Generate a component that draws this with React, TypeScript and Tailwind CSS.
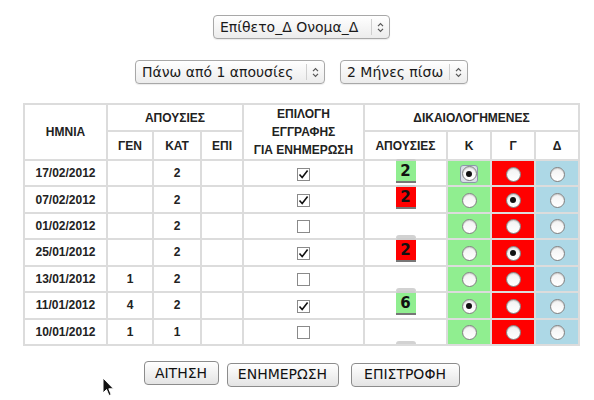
import React from 'react'

type Row = {
  date: string
  gen: string
  kat: string
  check: boolean
  badge?: { n: string; color: 'green' | 'red' }
  pick?: 'K' | 'G' | 'D'
  focus?: boolean
}

const rows: Row[] = [
  { date: '17/02/2012', gen: '', kat: '2', check: true, badge: { n: '2', color: 'green' }, pick: 'K', focus: true },
  { date: '07/02/2012', gen: '', kat: '2', check: true, badge: { n: '2', color: 'red' }, pick: 'G' },
  { date: '01/02/2012', gen: '', kat: '2', check: false },
  { date: '25/01/2012', gen: '', kat: '2', check: true, badge: { n: '2', color: 'red' }, pick: 'G' },
  { date: '13/01/2012', gen: '1', kat: '2', check: false },
  { date: '11/01/2012', gen: '4', kat: '2', check: true, badge: { n: '6', color: 'green' }, pick: 'K' },
  { date: '10/01/2012', gen: '1', kat: '1', check: false },
]

const ui = { fontFamily: '"DejaVu Sans", "Noto Sans", sans-serif' }
const tableFont = { fontFamily: '"Liberation Sans", Arial, sans-serif' }

function Arrows() {
  return (
    <svg width="7" height="11" viewBox="0 0 7 11" fill="none" stroke="#555" strokeWidth="1.2">
      <path d="M1 4.2 L3.5 1.6 L6 4.2" />
      <path d="M1 6.8 L3.5 9.4 L6 6.8" />
    </svg>
  )
}

function Select({ label, w }: { label: string; w: string }) {
  return (
    <div
      className={`${w} h-[24px] flex items-center border border-[#a8a8a8] rounded-[4px] bg-gradient-to-b from-white to-[#ececec] text-[14px] text-[#1a1a1a] shadow-[0_1px_1px_rgba(0,0,0,0.08)]`}
      style={ui}
    >
      <span className="flex-1 pl-[6px] whitespace-nowrap">{label}</span>
      <span className="w-px h-[16px] bg-[#cfcfcf]" />
      <span className="w-[17px] flex justify-center">
        <Arrows />
      </span>
    </div>
  )
}

function Button({ label, w }: { label: string; w: string }) {
  return (
    <button
      className={`${w} h-[24px] border border-[#8c8c8c] rounded-[4px] bg-gradient-to-b from-white to-[#e4e4e4] text-[14px] text-[#111]`}
      style={ui}
    >
      {label}
    </button>
  )
}

function Check({ on }: { on: boolean }) {
  return (
    <span className="inline-flex w-[13px] h-[13px] border border-[#8a8a8a] bg-white items-center justify-center align-middle">
      {on && (
        <svg width="11" height="11" viewBox="0 0 11 11" fill="none" stroke="#111" strokeWidth="1.6">
          <path d="M1.5 5.5 L4.2 8.6 L9.6 1.6" />
        </svg>
      )}
    </span>
  )
}

function Radio({ on, focus }: { on: boolean; focus?: boolean }) {
  const dot = (
    <span className="w-[15px] h-[15px] rounded-full border border-[#7f7f7f] bg-gradient-to-b from-[#f2f2f2] to-white flex items-center justify-center shadow-[inset_0_1px_1px_rgba(0,0,0,0.15)]">
      {on && <span className="w-[6px] h-[6px] rounded-full bg-[#111]" />}
    </span>
  )
  if (focus) {
    return (
      <span className="inline-flex w-[18px] h-[18px] rounded-[3px] border border-[#8d97aa] bg-[#d9dee7] items-center justify-center align-middle">
        {dot}
      </span>
    )
  }
  return <span className="inline-flex align-middle">{dot}</span>
}

function Badge({ b }: { b?: Row['badge'] }) {
  if (!b) {
    return (
      <div className="h-[24px] flex flex-col justify-end items-center">
        <div className="w-[20px] h-[3px] rounded-t-[3px] bg-[#d2d2d2]" />
      </div>
    )
  }
  return (
    <div className="h-[24px] flex flex-col items-center">
      <div
        className={`relative w-[20px] h-[22px] border-b-2 border-[#777] text-[15px] font-bold leading-[20px] text-[#111] text-center ${
          b.color === 'green' ? 'bg-[#90ee90]' : 'bg-[#ff0000]'
        }`}
        style={ui}
      >
        <span className="absolute -top-[2px] left-0 right-0 h-[2px] rounded-t-[3px] bg-[#cdcdcd]" />
        {b.n}
      </div>
    </div>
  )
}

const cell = 'border-2 border-[#dcdcdc] text-center p-0'

export default function App() {
  return (
    <div className="w-[594px] h-[400px] bg-white relative">
      <div className="w-[555px] ml-[24px] flex flex-col items-center pt-[15px]">
        <Select label="Επίθετο_Δ Ονομα_Δ" w="w-[177px]" />

        <div className="flex gap-[15px] mt-[21px]">
          <Select label="Πάνω από 1 απουσίες" w="w-[190px]" />
          <Select label="2 Μήνες πίσω" w="w-[128px]" />
        </div>

        <table
          className="mt-[19px] w-[555px] table-fixed border-collapse text-[12px] font-bold text-[#222]"
          style={tableFont}
        >
          <colgroup>
            <col className="w-[83px]" />
            <col className="w-[46px]" />
            <col className="w-[48px]" />
            <col className="w-[42px]" />
            <col className="w-[121px]" />
            <col className="w-[83px]" />
            <col className="w-[44px]" />
            <col className="w-[44px]" />
            <col className="w-[44px]" />
          </colgroup>
          <thead>
            <tr className="h-[26px]">
              <th rowSpan={2} className={cell}>ΗΜΝΙΑ</th>
              <th colSpan={3} className={cell}>ΑΠΟΥΣΙΕΣ</th>
              <th rowSpan={2} className={`${cell} leading-[18px]`}>
                ΕΠΙΛΟΓΗ
                <br />
                ΕΓΓΡΑΦΗΣ
                <br />
                ΓΙΑ ΕΝΗΜΕΡΩΣΗ
              </th>
              <th colSpan={4} className={cell}>ΔΙΚΑΙΟΛΟΓΗΜΕΝΕΣ</th>
            </tr>
            <tr className="h-[27px]">
              <th className={cell}>ΓΕΝ</th>
              <th className={cell}>ΚΑΤ</th>
              <th className={cell}>ΕΠΙ</th>
              <th className={cell}>ΑΠΟΥΣΙΕΣ</th>
              <th className={cell}>Κ</th>
              <th className={cell}>Γ</th>
              <th className={cell}>Δ</th>
            </tr>
          </thead>
          <tbody>
            {rows.map((r) => (
              <tr key={r.date} className="h-[26px]">
                <td className={cell}>{r.date}</td>
                <td className={cell}>{r.gen}</td>
                <td className={cell}>{r.kat}</td>
                <td className={cell}></td>
                <td className={cell}>
                  <Check on={r.check} />
                </td>
                <td className={`${cell} align-top`}>
                  <Badge b={r.badge} />
                </td>
                <td className={`${cell} bg-[#90ee90]`}>
                  <Radio on={r.pick === 'K'} focus={r.focus} />
                </td>
                <td className={`${cell} bg-[#ff0000]`}>
                  <Radio on={r.pick === 'G'} />
                </td>
                <td className={`${cell} bg-[#add8e6]`}>
                  <Radio on={r.pick === 'D'} />
                </td>
              </tr>
            ))}
          </tbody>
        </table>

        <div className="flex mt-[18px]">
          <Button label="ΑΙΤΗΣΗ" w="w-[75px]" />
          <div className="ml-[8px]">
            <Button label="ΕΝΗΜΕΡΩΣΗ" w="w-[112px]" />
          </div>
          <div className="ml-[12px]">
            <Button label="ΕΠΙΣΤΡΟΦΗ" w="w-[109px]" />
          </div>
        </div>
      </div>

      {/* mouse pointer */}
      <svg className="absolute left-[102px] top-[377px]" width="13" height="20" viewBox="0 0 13 20">
        <path d="M1 1 L1 16 L4.5 12.5 L7 18.5 L9.2 17.6 L6.8 11.8 L11.5 11.8 Z" fill="#111" stroke="#fff" strokeWidth="1" />
      </svg>
    </div>
  )
}
